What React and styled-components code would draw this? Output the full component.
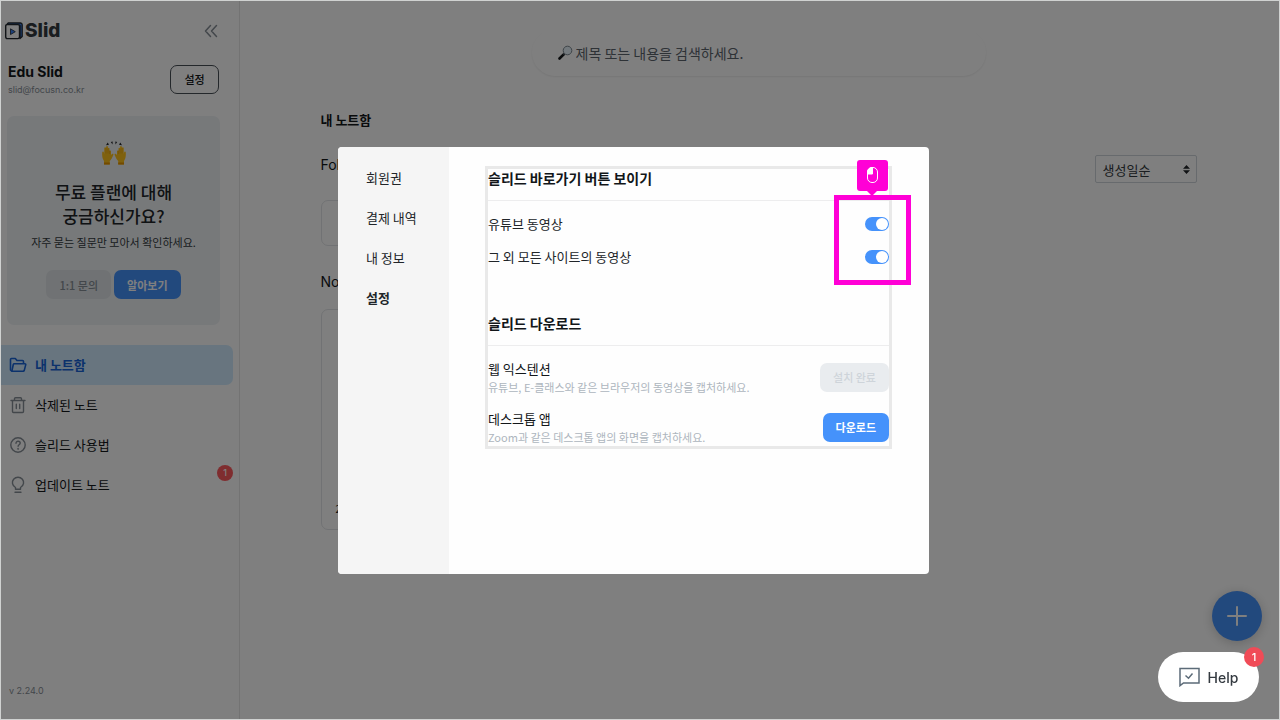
import React from 'react';
import styled, { createGlobalStyle } from 'styled-components'

const GlobalStyle = createGlobalStyle`
    * {
        box-sizing: border-box;
    }
    body {
        margin: 0;
        background: #ffffff;
        color: #121619;
        font-family: "Noto Sans CJK KR", "Noto Sans", sans-serif;
        font-size: 13px;
        line-height: 20px;
    }
    button, input, select {
        margin: 0;
        font-family: inherit;
    }
    h1, h2, p, ul {
        margin: 0;
        padding: 0;
    }
    svg {
        display: block;
        flex: none;
    }
`

const Shell = styled.div`
    display: flex;
    min-height: 100vh;
    border: 1px solid #d0d2d1;
`

const Sidebar = styled.aside`
    display: flex;
    flex-direction: column;
    flex: none;
    width: 239px;
    border-right: 1px solid #e6e6e6;
`

const LogoRow = styled.div`
    display: flex;
    align-items: center;
    justify-content: space-between;
    height: 60px;
    padding: 0 21px 0 4px;
`

const Logo = styled.div`
    display: flex;
    align-items: center;
    gap: 2px;
    font-family: Inter, sans-serif;
    font-size: 19px;
    font-weight: 800;
    color: #343a40;
`

const CollapseButton = styled.button`
    padding: 0;
    border: 0;
    background: none;
    color: #868e96;
`

const UserRow = styled.div`
    display: flex;
    align-items: center;
    justify-content: space-between;
    padding: 0 20px 0 7px;
`

const UserName = styled.p`
    font-family: Inter, sans-serif;
    font-size: 14px;
    font-weight: 700;
    line-height: 22px;
`

const UserMail = styled.p`
    font-family: Inter, sans-serif;
    font-size: 9px;
    line-height: 14px;
    color: #868e96;
`

const OutlineButton = styled.button`
    width: 49px;
    height: 29px;
    padding: 0;
    border: 1px solid #495057;
    border-radius: 7px;
    background: none;
    color: #121619;
    font-size: 11px;
    font-weight: 500;
`

const PlanCard = styled.section`
    display: flex;
    flex-direction: column;
    align-items: center;
    margin: 19px 19px 0 6px;
    padding: 25px 0 26px;
    border-radius: 7px;
    background: #eff2f5;
    text-align: center;
`

const PlanTitle = styled.h2`
    margin-top: 14px;
    color: #212529;
    font-size: 17px;
    font-weight: 500;
    line-height: 24px;
`

const PlanText = styled.p`
    margin: 6px 0 20px;
    color: #343a40;
    font-size: 11px;
    line-height: 16px;
`

const ButtonPair = styled.div`
    display: flex;
    gap: 3px;
`

const Button = styled.button`
    height: 29px;
    padding: 0 13px;
    border: 0;
    border-radius: 7px;
    background: ${props => props.$primary ? '#4592fb' : '#e0e5e8'};
    color: ${props => props.$primary ? '#ffffff' : '#868e96'};
    font-size: 11px;
    font-weight: ${props => props.$primary ? 700 : 500};

    &:disabled {
        background: #e9ecef;
        color: #ced4da;
    }
`

const NavList = styled.ul`
    margin: 20px 6px 0 0;
    list-style: none;
`

const NavLink = styled.a`
    position: relative;
    display: flex;
    align-items: center;
    gap: 8px;
    height: 40px;
    padding-left: 8px;
    border-radius: 0 7px 7px 0;
    background: ${props => props.$active ? '#d0ebff' : 'none'};
    color: ${props => props.$active ? '#1864d8' : '#121619'};
    font-weight: ${props => props.$active ? 700 : 400};
    text-decoration: none;

    svg {
        color: ${props => props.$active ? '#1864d8' : '#868e96'};
    }
`

const Count = styled.span`
    position: absolute;
    top: ${props => props.$large ? '-5px' : '0'};
    right: ${props => props.$large ? '-5px' : '0'};
    width: ${props => props.$large ? 20 : 16}px;
    height: ${props => props.$large ? 20 : 16}px;
    border-radius: 50%;
    background: ${props => props.$large ? '#f04b57' : '#ff5a5f'};
    color: #ffffff;
    font-family: Inter, sans-serif;
    font-size: ${props => props.$large ? 11 : 9}px;
    font-weight: 500;
    line-height: ${props => props.$large ? 20 : 16}px;
    text-align: center;
`

const Version = styled.p`
    margin-top: auto;
    padding: 0 0 20px 8px;
    font-family: Inter, sans-serif;
    font-size: 9px;
    line-height: 16px;
    color: #868e96;
`

const Main = styled.main`
    flex: 1;
    padding: 28px 26px 0 24px;
`

const SearchBox = styled.label`
    display: flex;
    align-items: center;
    gap: 3px;
    max-width: 454px;
    height: 47px;
    margin: 0 auto;
    padding: 0 26px;
    border-radius: 24px;
    box-shadow: 0 1px 2px rgba(0, 0, 0, 0.08);
`

const SearchInput = styled.input`
    flex: 1;
    min-width: 0;
    padding: 0;
    border: 0;
    outline: 0;
    background: none;
    font-size: 14px;

    &::placeholder {
        color: #5c656d;
        opacity: 1;
    }
`

const Library = styled.div`
    max-width: 876px;
    margin: 34px auto 0;
`

const LibraryTitle = styled.h1`
    font-size: 13px;
    font-weight: 700;
    line-height: 20px;
`

const GroupRow = styled.div`
    display: flex;
    justify-content: space-between;
    margin-top: ${props => props.$first ? 25 : 26}px;
`

const GroupTitle = styled.h2`
    font-family: Inter, sans-serif;
    font-size: 14px;
    font-weight: 400;
    line-height: 20px;
`

const SortBox = styled.div`
    position: relative;

    svg {
        position: absolute;
        top: 10px;
        right: 7px;
        pointer-events: none;
    }
`

const SortSelect = styled.select`
    appearance: none;
    width: 102px;
    height: 28px;
    padding: 0 7px;
    border: 1px solid #ced4da;
    border-radius: 2px;
    background: none;
    color: #343a40;
    font-size: 13px;
`

const Tile = styled.div`
    display: flex;
    align-items: flex-end;
    width: 190px;
    height: ${props => props.$tall ? 221 : 46}px;
    margin-top: 17px;
    padding: 12px 14px;
    border: 1px solid #e2e5e8;
    border-radius: 7px;
    font-size: 10px;
    line-height: 16px;
`

const AddButton = styled.button`
    position: fixed;
    right: 18px;
    bottom: 79px;
    display: grid;
    place-items: center;
    width: 50px;
    height: 50px;
    padding: 0;
    border: 0;
    border-radius: 50%;
    background: #4592fb;
    color: #ffffff;
    box-shadow: 0 2px 12px rgba(0, 0, 0, 0.2);
`

const Overlay = styled.div`
    position: fixed;
    inset: 1px;
    display: flex;
    align-items: center;
    justify-content: center;
    padding-right: 13px;
    background: rgba(0, 0, 0, 0.5);
`

const Modal = styled.div`
    display: flex;
    width: 591px;
    max-width: 92vw;
    min-height: 427px;
    border-radius: 4px;
    background: #fefefe;
`

const ModalMenu = styled.nav`
    flex: none;
    width: 111px;
    padding-top: 11px;
    border-radius: 4px 0 0 4px;
    background: #f5f5f5;
`

const ModalTab = styled.button`
    display: block;
    width: 100%;
    height: 40px;
    padding: 0 0 0 28px;
    border: 0;
    background: none;
    color: #212529;
    font-size: 13px;
    font-weight: ${props => props.$active ? 700 : 400};
    text-align: left;
`

const ModalBody = styled.div`
    flex: 1;
    padding: 19px 37px 0 36px;
`

const SettingsBox = styled.div`
    border: 3px solid #e9e9e9;
`

const SectionTitle = styled.h2`
    padding-bottom: 13px;
    border-bottom: 1px solid #ededee;
    color: #121619;
    font-size: 14px;
    font-weight: 700;
    line-height: 18px;
`

const ToggleGroup = styled.div`
    position: relative;
    margin: 7px 0 40px;
`

const ToggleRow = styled.label`
    display: flex;
    align-items: center;
    justify-content: space-between;
    height: 33px;
    color: #212529;
`

const Toggle = styled.input`
    appearance: none;
    display: flex;
    justify-content: flex-end;
    width: 24px;
    height: 14px;
    padding: 1px;
    border-radius: 7px;
    background: #4592fb;

    &::before {
        content: '';
        width: 12px;
        height: 12px;
        border-radius: 50%;
        background: #ffffff;
    }
`

const ClickArea = styled.div`
    position: absolute;
    top: -13px;
    right: -22px;
    bottom: -11px;
    width: 77px;
    border: 5px solid #ff00d6;
    pointer-events: none;
`

const ClickHint = styled.div`
    position: absolute;
    left: 18px;
    bottom: calc(100% + 9px);
    display: grid;
    place-items: center;
    width: 31px;
    height: 31px;
    border-radius: 3px;
    background: #ff00d6;

    &::after {
        content: '';
        position: absolute;
        top: 100%;
        left: 10px;
        border: 5px solid transparent;
        border-top-color: #ff00d6;
        border-bottom: 0;
    }
`

const Downloads = styled.div`
    display: grid;
    gap: 13px;
    margin-top: 13px;
`

const DownloadRow = styled.div`
    display: flex;
    align-items: center;
    justify-content: space-between;
`

const DownloadName = styled.p`
    color: #121619;
`

const DownloadText = styled.p`
    color: #adb5bd;
    font-size: 11px;
    line-height: 17px;
`

const HelpButton = styled.button`
    position: fixed;
    right: 21px;
    bottom: 18px;
    display: flex;
    align-items: center;
    justify-content: center;
    gap: 8px;
    width: 101px;
    height: 50px;
    padding: 0;
    border: 0;
    border-radius: 25px;
    background: #ffffff;
    color: #343a40;
    font-family: Inter, sans-serif;
    font-size: 14px;
    font-weight: 500;
`

const LogoIcon = () => (
    <svg width="18" height="18" viewBox="0 0 18 18" fill="none">
        <path d="M1 3.500L3.200 1H15.500A1.800 1.800 0 0 1 17.200 2.800V14.500L15 16.500V3.500z" fill="#3b82f6" stroke="#22282e" strokeWidth="1.300" strokeLinejoin="round" />
        <rect x="0.700" y="2.600" width="13.800" height="14" rx="1.500" fill="#ffffff" stroke="#22282e" strokeWidth="1.400" />
        <path d="M5.500 6.800v5.800l4.800-2.900z" fill="#3b82f6" stroke="#22282e" strokeWidth="0.800" strokeLinejoin="round" />
    </svg>
)

const CollapseIcon = () => (
    <svg width="14" height="14" viewBox="0 0 14 14" fill="none" stroke="currentColor" strokeWidth="1.500" strokeLinecap="round" strokeLinejoin="round">
        <path d="M6.500 1.500L1.500 7l5 5.500M12.500 1.500L7.500 7l5 5.500" />
    </svg>
)

const Hand = () => (
    <>
        <path d="M3 23.500V20C1.200 17.500 1 14.500 1.200 11.500c.1-1.200 1.500-1.200 1.700-.1L3.200 13l.1-6c0-1.100 1.600-1.100 1.700 0l.2-1.300c.1-1.100 1.700-1 1.700.1V7.500c.1-1 1.600-.9 1.600.1V10c.2-.9 1.500-.8 1.500.2V14c.6-.9 1.300-1.600 2-1.300.7.300.4 1.200.1 1.900-.9 2.200-1.700 4-3.300 5.400v3.500z" fill="#ffc21a" />
        <path d="M3 21.500h5.800v2H3z" fill="#e59400" />
        <path d="M5 7v5.500M7 7.500v5M8.600 9.500V13" stroke="#e09a10" strokeWidth="0.600" fill="none" />
    </>
)

const HandsIcon = () => (
    <svg width="26" height="25" viewBox="0 0 26 25">
        <Hand />
        <g transform="translate(26 0) scale(-1 1)">
            <Hand />
        </g>
        <path d="M5 4.200L6.700 1.400l1.300 2.400zM9.800 1.100l1.900-.5-.2 3zM16.200 1.100l-1.900-.5.2 3zM21 4.200L19.300 1.400 18 3.800z" fill="#23272b" />
    </svg>
)

const FolderIcon = () => (
    <svg width="18" height="18" viewBox="0 0 18 18" fill="none" stroke="currentColor" strokeWidth="1.600" strokeLinejoin="round">
        <path d="M2.800 15.300L1.500 14V3.500a1 1 0 0 1 1-1h3.800l1.700 2h5.500a1 1 0 0 1 1 1v2" />
        <path d="M2.800 15.300L4.300 8.500a1 1 0 0 1 1-.8h10.500a.9.900 0 0 1 .9 1.200l-1.500 5.700a1 1 0 0 1-1 .7z" />
    </svg>
)

const TrashIcon = () => (
    <svg width="18" height="18" viewBox="0 0 18 18" fill="none" stroke="currentColor" strokeWidth="1.400" strokeLinecap="round" strokeLinejoin="round">
        <path d="M2 4.500h14M5.500 4.500V2.800a1 1 0 0 1 1-1h5a1 1 0 0 1 1 1v1.700M3.500 4.500v11a1 1 0 0 0 1 1h9a1 1 0 0 0 1-1v-11M7.300 8.200v4.300M10.700 8.200v4.300" />
    </svg>
)

const QuestionIcon = () => (
    <svg width="18" height="18" viewBox="0 0 18 18" fill="none" stroke="currentColor" strokeWidth="1.400" strokeLinecap="round">
        <circle cx="9" cy="9" r="7.200" />
        <path d="M7 7.300c0-2.900 4.200-2.500 4.200-.2 0 1.600-2.100 1.700-2.100 3.200" />
        <circle cx="9.100" cy="12.700" r="0.300" fill="currentColor" />
    </svg>
)

const BulbIcon = () => (
    <svg width="18" height="18" viewBox="0 0 18 18" fill="none" stroke="currentColor" strokeWidth="1.400" strokeLinecap="round" strokeLinejoin="round">
        <path d="M6.500 13.200v-1.700C2.800 9.500 2.800 5.500 4.600 3.300 7 .6 11 .6 13.400 3.300c1.800 2.200 1.800 6.200-1.900 8.200v1.700zM6 16.200h6" />
    </svg>
)

const SearchIcon = () => (
    <svg width="15" height="15" viewBox="0 0 15 15" fill="none">
        <path d="M1.500 13.500l4.200-4.200" stroke="#15181b" strokeWidth="2.600" strokeLinecap="round" />
        <path d="M5.500 9.500l1.400-1.400" stroke="#69737c" strokeWidth="1.400" />
        <circle cx="9.500" cy="5.500" r="4.300" fill="#e6f3fa" stroke="#7c8790" />
    </svg>
)

const SortIcon = () => (
    <svg width="7" height="9" viewBox="0 0 7 9" fill="#23272b">
        <path d="M0 3.700L3.500 0 7 3.700zM0 5.300L3.500 9 7 5.300z" />
    </svg>
)

const PlusIcon = () => (
    <svg width="20" height="20" viewBox="0 0 20 20" stroke="currentColor" strokeWidth="2" strokeLinecap="round">
        <path d="M10 1v18M1 10h18" />
    </svg>
)

const MouseIcon = () => (
    <svg width="11" height="16" viewBox="0 0 11 16" fill="none" stroke="#ffffff">
        <rect x="0.500" y="0.500" width="10" height="15" rx="4.500" />
        <path d="M5.500 .5v6.500H.5V5a4.500 4.500 0 0 1 4.500-4.500z" fill="#ffffff" />
    </svg>
)

const ChatIcon = () => (
    <svg width="21" height="20" viewBox="0 0 21 20" fill="none" stroke="#5c6b78" strokeWidth="1.500">
        <path d="M1 1.500h19V16H4.500L1 18.700z" />
        <path d="M6.500 8.500l3 2.700 4-4.700" />
    </svg>
)

const navItems = [
    { name: '내 노트함', icon: <FolderIcon />, active: true },
    { name: '삭제된 노트', icon: <TrashIcon /> },
    { name: '슬리드 사용법', icon: <QuestionIcon /> },
    { name: '업데이트 노트', icon: <BulbIcon />, count: 1 },
]

const tabs = ['회원권', '결제 내역', '내 정보', '설정']

const SideMenu = () => (
    <Sidebar>
        <LogoRow>
            <Logo><LogoIcon />Slid</Logo>
            <CollapseButton aria-label="메뉴 접기"><CollapseIcon /></CollapseButton>
        </LogoRow>
        <UserRow>
            <div>
                <UserName>Edu Slid</UserName>
                <UserMail>slid@focusn.co.kr</UserMail>
            </div>
            <OutlineButton>설정</OutlineButton>
        </UserRow>
        <PlanCard>
            <HandsIcon />
            <PlanTitle>무료 플랜에 대해<br />궁금하신가요?</PlanTitle>
            <PlanText>자주 묻는 질문만 모아서 확인하세요.</PlanText>
            <ButtonPair>
                <Button>1:1 문의</Button>
                <Button $primary>알아보기</Button>
            </ButtonPair>
        </PlanCard>
        <NavList>
            {navItems.map((item) => (
                <li key={item.name}>
                    <NavLink href="#" $active={item.active}>
                        {item.icon}
                        {item.name}
                        {item.count && <Count>{item.count}</Count>}
                    </NavLink>
                </li>
            ))}
        </NavList>
        <Version>v 2.24.0</Version>
    </Sidebar>
)

const NoteLibrary = () => (
    <Main>
        <SearchBox>
            <SearchIcon />
            <SearchInput type="text" aria-label="검색" placeholder="제목 또는 내용을 검색하세요." />
        </SearchBox>
        <Library>
            <LibraryTitle>내 노트함</LibraryTitle>
            <GroupRow $first>
                <GroupTitle>Folder</GroupTitle>
                <SortBox>
                    <SortSelect aria-label="정렬">
                        <option>생성일순</option>
                    </SortSelect>
                    <SortIcon />
                </SortBox>
            </GroupRow>
            <Tile />
            <GroupRow>
                <GroupTitle>Note</GroupTitle>
            </GroupRow>
            <Tile $tall>2</Tile>
        </Library>
        <AddButton aria-label="추가"><PlusIcon /></AddButton>
    </Main>
)

const SettingsModal = () => (
    <Overlay>
        <Modal role="dialog" aria-label="설정">
            <ModalMenu>
                {tabs.map((tab) => (
                    <ModalTab key={tab} $active={tab === '설정'}>{tab}</ModalTab>
                ))}
            </ModalMenu>
            <ModalBody>
                <SettingsBox>
                    <SectionTitle>슬리드 바로가기 버튼 보이기</SectionTitle>
                    <ToggleGroup>
                        <ToggleRow>
                            유튜브 동영상
                            <Toggle type="checkbox" defaultChecked />
                        </ToggleRow>
                        <ToggleRow>
                            그 외 모든 사이트의 동영상
                            <Toggle type="checkbox" defaultChecked />
                        </ToggleRow>
                        <ClickArea>
                            <ClickHint><MouseIcon /></ClickHint>
                        </ClickArea>
                    </ToggleGroup>
                    <SectionTitle>슬리드 다운로드</SectionTitle>
                    <Downloads>
                        <DownloadRow>
                            <div>
                                <DownloadName>웹 익스텐션</DownloadName>
                                <DownloadText>유튜브, E-클래스와 같은 브라우저의 동영상을 캡처하세요.</DownloadText>
                            </div>
                            <Button disabled>설치 완료</Button>
                        </DownloadRow>
                        <DownloadRow>
                            <div>
                                <DownloadName>데스크톱 앱</DownloadName>
                                <DownloadText>Zoom과 같은 데스크톱 앱의 화면을 캡처하세요.</DownloadText>
                            </div>
                            <Button $primary>다운로드</Button>
                        </DownloadRow>
                    </Downloads>
                </SettingsBox>
            </ModalBody>
        </Modal>
    </Overlay>
)

const App = () => (
    <>
        <GlobalStyle />
        <Shell>
            <SideMenu />
            <NoteLibrary />
        </Shell>
        <SettingsModal />
        <HelpButton>
            <ChatIcon />
            Help
            <Count $large>1</Count>
        </HelpButton>
    </>
)

export default App;
